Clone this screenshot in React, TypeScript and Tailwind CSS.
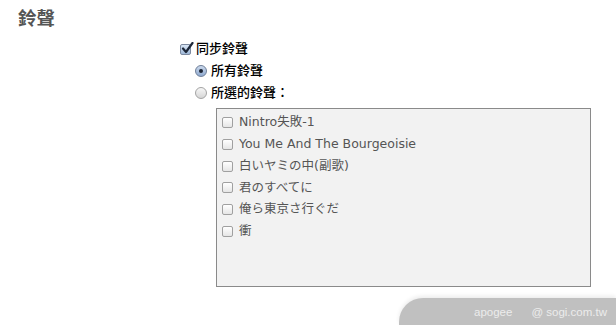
import React from "react";

const cjk = '"DejaVu Sans", "Noto Sans CJK TC", "Noto Sans CJK JP", sans-serif';

function AquaCheck({ checked }: { checked?: boolean }) {
  return (
    <span className="relative inline-block w-[11px] h-[11px] rounded-[2px] border border-[#7d8aa0] bg-gradient-to-b from-[#d9e6f5] to-[#9fb8d8] shrink-0">
      {checked && (
        <svg className="absolute left-[0px] top-[-3px]" width="13" height="13" viewBox="0 0 13 13">
          <path d="M2 6.5 L5 10 L11.5 1" fill="none" stroke="#1d2738" strokeWidth="2.2" strokeLinecap="round" strokeLinejoin="round" />
        </svg>
      )}
    </span>
  );
}

function Radio({ selected }: { selected?: boolean }) {
  return (
    <span
      className={
        "relative inline-flex items-center justify-center w-[12px] h-[12px] rounded-full border shrink-0 " +
        (selected
          ? "border-[#6f7f99] bg-gradient-to-b from-[#cbd9ec] to-[#8fa9cf]"
          : "border-[#a3a3a3] bg-gradient-to-b from-[#f7f7f7] to-[#d6d6d6]")
      }
    >
      {selected && <span className="w-[4px] h-[4px] rounded-full bg-[#1c2433]" />}
    </span>
  );
}

function ItemCheck() {
  return (
    <span className="inline-block w-[11px] h-[11px] rounded-[2px] border border-[#a0a0a0] bg-gradient-to-b from-[#ffffff] to-[#e6e6e6] shrink-0" />
  );
}

const items = [
  "Nintro失敗-1",
  "You Me And The Bourgeoisie",
  "白いヤミの中(副歌)",
  "君のすべてに",
  "俺ら東京さ行ぐだ",
  "衝",
];

export default function App() {
  return (
    <div className="w-[616px] h-[325px] bg-white overflow-hidden flex flex-col" style={{ fontFamily: cjk }}>
      <div className="pt-[9px] pl-[18px] h-[29px]">
        <div className="h-[20px] leading-[20px] text-[18.5px] font-bold text-[#555555]">鈴聲</div>
      </div>
      <div className="mt-[9px] pl-[180px] flex flex-col">
        <div className="h-[22px] flex items-center gap-[5px] text-[13px] font-medium text-black">
          <AquaCheck checked />
          <span>同步鈴聲</span>
        </div>
        <div className="pl-[15px] h-[22px] flex items-center gap-[4px] text-[13px] font-medium text-black">
          <Radio selected />
          <span>所有鈴聲</span>
        </div>
        <div className="pl-[15px] h-[22px] flex items-center gap-[4px] text-[13px] font-medium text-black">
          <Radio />
          <span>所選的鈴聲：</span>
        </div>
      </div>
      <div className="mt-[4px] ml-[216px] w-[375px] h-[179px] border border-[#8a8a8a] bg-[#f2f2f2] pt-[3px] pl-[5px] flex flex-col">
        {items.map((t) => (
          <div key={t} className="h-[21.7px] flex items-center gap-[6px] text-[12.5px] text-[#555555]">
            <ItemCheck />
            <span>{t}</span>
          </div>
        ))}
      </div>
      <div className="mt-[11px] flex justify-end">
        <div
          className="w-[217px] h-[27px] rounded-tl-[24px] bg-[#c0c0c0] shadow-[0_-2px_4px_rgba(0,0,0,0.08)] flex items-center justify-end pr-[9px] pt-[2px] gap-[19px] text-[11.5px] text-[#ececec]"
          style={{ fontFamily: '"Liberation Sans", Arial, sans-serif' }}
        >
          <span>apogee</span>
          <span>@ sogi.com.tw</span>
        </div>
      </div>
    </div>
  );
}
